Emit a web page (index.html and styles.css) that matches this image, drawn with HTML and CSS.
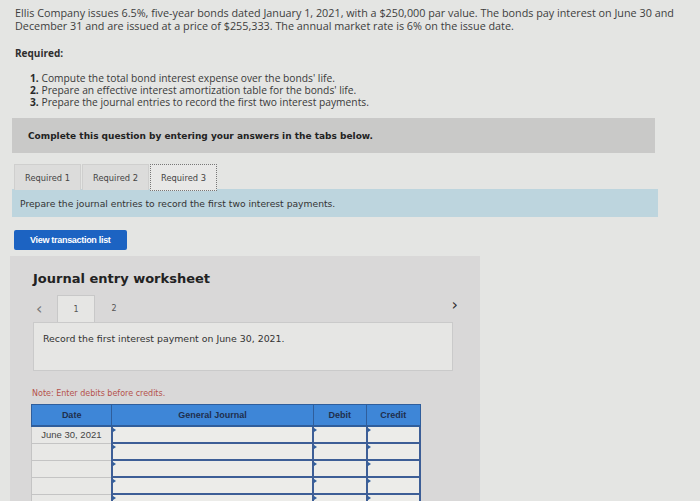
FILE: index.html
```html
<!DOCTYPE html>
<html>
<head>
<meta charset="utf-8">
<link rel="stylesheet" href="styles.css">
</head>
<body>
<div class="page">
  <p class="problem">Ellis Company issues 6.5%, five-year bonds dated January 1, 2021, with a $250,000 par value. The bonds pay interest on June 30 and December 31 and are issued at a price of $255,333. The annual market rate is 6% on the issue date.</p>
  <p class="req-title">Required:</p>
  <ol class="req-list">
    <li><b>1.</b> Compute the total bond interest expense over the bonds' life.</li>
    <li><b>2.</b> Prepare an effective interest amortization table for the bonds' life.</li>
    <li><b>3.</b> Prepare the journal entries to record the first two interest payments.</li>
  </ol>
  <div class="complete-bar">Complete this question by entering your answers in the tabs below.</div>
  <div class="tabs">
    <div class="tab">Required 1</div>
    <div class="tab">Required 2</div>
    <div class="tab active">Required 3</div>
  </div>
  <div class="instr-bar">Prepare the journal entries to record the first two interest payments.</div>
  <button class="view-btn">View transaction list</button>
  <div class="worksheet">
    <h2 class="ws-title">Journal entry worksheet</h2>
    <div class="ws-nav">
      <span class="arrow">&lsaquo;</span>
      <span class="pg active">1</span>
      <span class="pg">2</span>
      <span class="spacer"></span>
      <span class="arrow right">&rsaquo;</span>
    </div>
    <div class="record-box">Record the first interest payment on June 30, 2021.</div>
    <p class="note">Note: Enter debits before credits.</p>
    <table class="journal">
      <thead>
        <tr><th class="c-date">Date</th><th class="c-gj">General Journal</th><th class="c-dr">Debit</th><th class="c-cr">Credit</th></tr>
      </thead>
      <tbody>
        <tr><td class="c-date">June 30, 2021</td><td class="inp"><i></i></td><td class="inp"><i></i></td><td class="inp"><i></i></td></tr>
        <tr><td class="c-date"></td><td class="inp"><i></i></td><td class="inp"><i></i></td><td class="inp"><i></i></td></tr>
        <tr><td class="c-date"></td><td class="inp"><i></i></td><td class="inp"><i></i></td><td class="inp"><i></i></td></tr>
        <tr><td class="c-date"></td><td class="inp"><i></i></td><td class="inp"><i></i></td><td class="inp"><i></i></td></tr>
        <tr><td class="c-date"></td><td class="inp"><i></i></td><td class="inp"><i></i></td><td class="inp"><i></i></td></tr>
      </tbody>
    </table>
  </div>
</div>
</body>
</html>
```

FILE: styles.css
```css
html, body {
  margin: 0;
  padding: 0;
  background: #e4e5e3;
  overflow: hidden;
}
.page {
  width: 700px;
  height: 501px;
  overflow: hidden;
  font-family: "Open Sans", "Liberation Sans", sans-serif;
  color: #3a3a3a;
}
.problem {
  margin: 0;
  padding: 6px 12px 0 15px;
  font-size: 10.8px;
  line-height: 13px;
  color: #3d3d3d;
}
.req-title {
  margin: 15px 0 0 15px;
  font-size: 10px;
  font-weight: bold;
  line-height: 13px;
  color: #2e2e2e;
}
.req-list {
  list-style: none;
  margin: 12px 0 0 30px;
  padding: 0;
  font-size: 10.25px;
  line-height: 12px;
  color: #3a3a3a;
}
.req-list b { color: #2a2a2a; }
.complete-bar {
  margin: 10px 45px 0 12px;
  height: 35px;
  background: #c9c9c8;
  font-family: "DejaVu Sans", sans-serif;
  font-weight: bold;
  font-size: 9px;
  line-height: 36px;
  padding-left: 16px;
  color: #222;
}
.tabs {
  display: flex;
  margin: 11px 0 0 14px;
  height: 25px;
  position: relative;
  z-index: 1;
}
.tab {
  width: 65px;
  height: 25px;
  background: #dcdcdb;
  border: 1px solid #cfcfce;
  border-bottom: none;
  margin-right: 1px;
  font-family: "DejaVu Sans", sans-serif;
  font-size: 8.3px;
  line-height: 26px;
  text-align: center;
  color: #444;
  white-space: nowrap;
}
.tab.active {
  width: 65px;
  height: 25px;
  background: #e8e8e7;
  border: 1px dotted #777;
  border-bottom: 1px dotted #777;
}
.instr-bar {
  margin: 0 42px 0 12px;
  height: 28px;
  background: #bdd5de;
  font-family: "DejaVu Sans", sans-serif;
  font-size: 9.2px;
  line-height: 29px;
  padding-left: 8px;
  color: #333;
}
.view-btn {
  display: block;
  margin: 13px 0 0 14px;
  width: 113px;
  height: 20px;
  border: none;
  border-radius: 2px;
  background: #1c63c2;
  color: #fff;
  font-family: "Liberation Sans", Arial, sans-serif;
  font-weight: bold;
  font-size: 9px;
  letter-spacing: -0.3px;
  text-align: left;
  padding: 0 0 0 16px;
}
.worksheet {
  margin: 6px 0 0 10px;
  width: 470px;
  height: 260px;
  background: #d9d8d8;
  padding: 0;
  box-sizing: border-box;
}
.ws-title {
  margin: 0;
  padding: 14px 0 0 23px;
  font-family: "DejaVu Sans", sans-serif;
  font-size: 13px;
  font-weight: bold;
  line-height: 17px;
  color: #222;
}
.ws-nav {
  display: flex;
  align-items: center;
  margin: 8px 20px 0 23px;
  height: 27px;
}
.arrow {
  font-family: "DejaVu Sans", sans-serif;
  font-size: 16px;
  color: #777;
  width: 21px;
  padding-left: 3px;
  line-height: 16px;
}
.arrow.right {
  color: #333;
  width: auto;
  margin-top: -8px;
  padding-right: 2px;
}
.pg {
  font-family: "DejaVu Sans", sans-serif;
  font-size: 8px;
  color: #555;
  width: 38px;
  height: 27px;
  line-height: 27px;
  text-align: center;
  box-sizing: border-box;
}
.pg.active {
  background: #e6e6e4;
  border: 1px solid #c8c8c8;
  border-bottom: none;
}
.spacer { flex: 1; }
.record-box {
  margin: 0 27px 0 23px;
  height: 49px;
  background: #e6e6e4;
  border: 1px solid #cacaca;
  box-sizing: border-box;
  font-family: "DejaVu Sans", sans-serif;
  font-size: 9.4px;
  padding: 10px 0 0 9px;
  color: #333;
}
.note {
  margin: 18px 0 0 22px;
  font-family: "DejaVu Sans", sans-serif;
  font-size: 8px;
  color: #b5524c;
  line-height: 10px;
}
.journal {
  margin: 5px 0 0 21px;
  border-collapse: collapse;
  width: 390px;
  font-family: "Liberation Sans", Arial, sans-serif;
}
.journal th {
  background: #3e86d7;
  color: #1f2f4d;
  font-size: 9px;
  font-weight: bold;
  height: 20px;
  padding: 0;
  border: 1px solid #2f5e9c;
  border-bottom: 2px solid #2f5e9c;
}
.c-date { width: 80px; }
.c-gj { width: 204px; }
.c-dr { width: 53px; }
.c-cr { width: 53px; }
.journal td {
  height: 15px;
  padding: 0;
  font-size: 9.5px;
  color: #444;
}
.journal td.c-date {
  background: #e8e8e6;
  border: 1px solid #c4c4c4;
  text-align: center;
}
.journal td.inp {
  background: #ecece9;
  border: 2px solid #3d5e96;
  position: relative;
}
.journal td.inp i {
  position: absolute;
  left: 0;
  top: 1px;
  width: 0;
  height: 0;
  border-top: 2px solid transparent;
  border-bottom: 2px solid transparent;
  border-left: 3px solid #2f5e9c;
}
```
